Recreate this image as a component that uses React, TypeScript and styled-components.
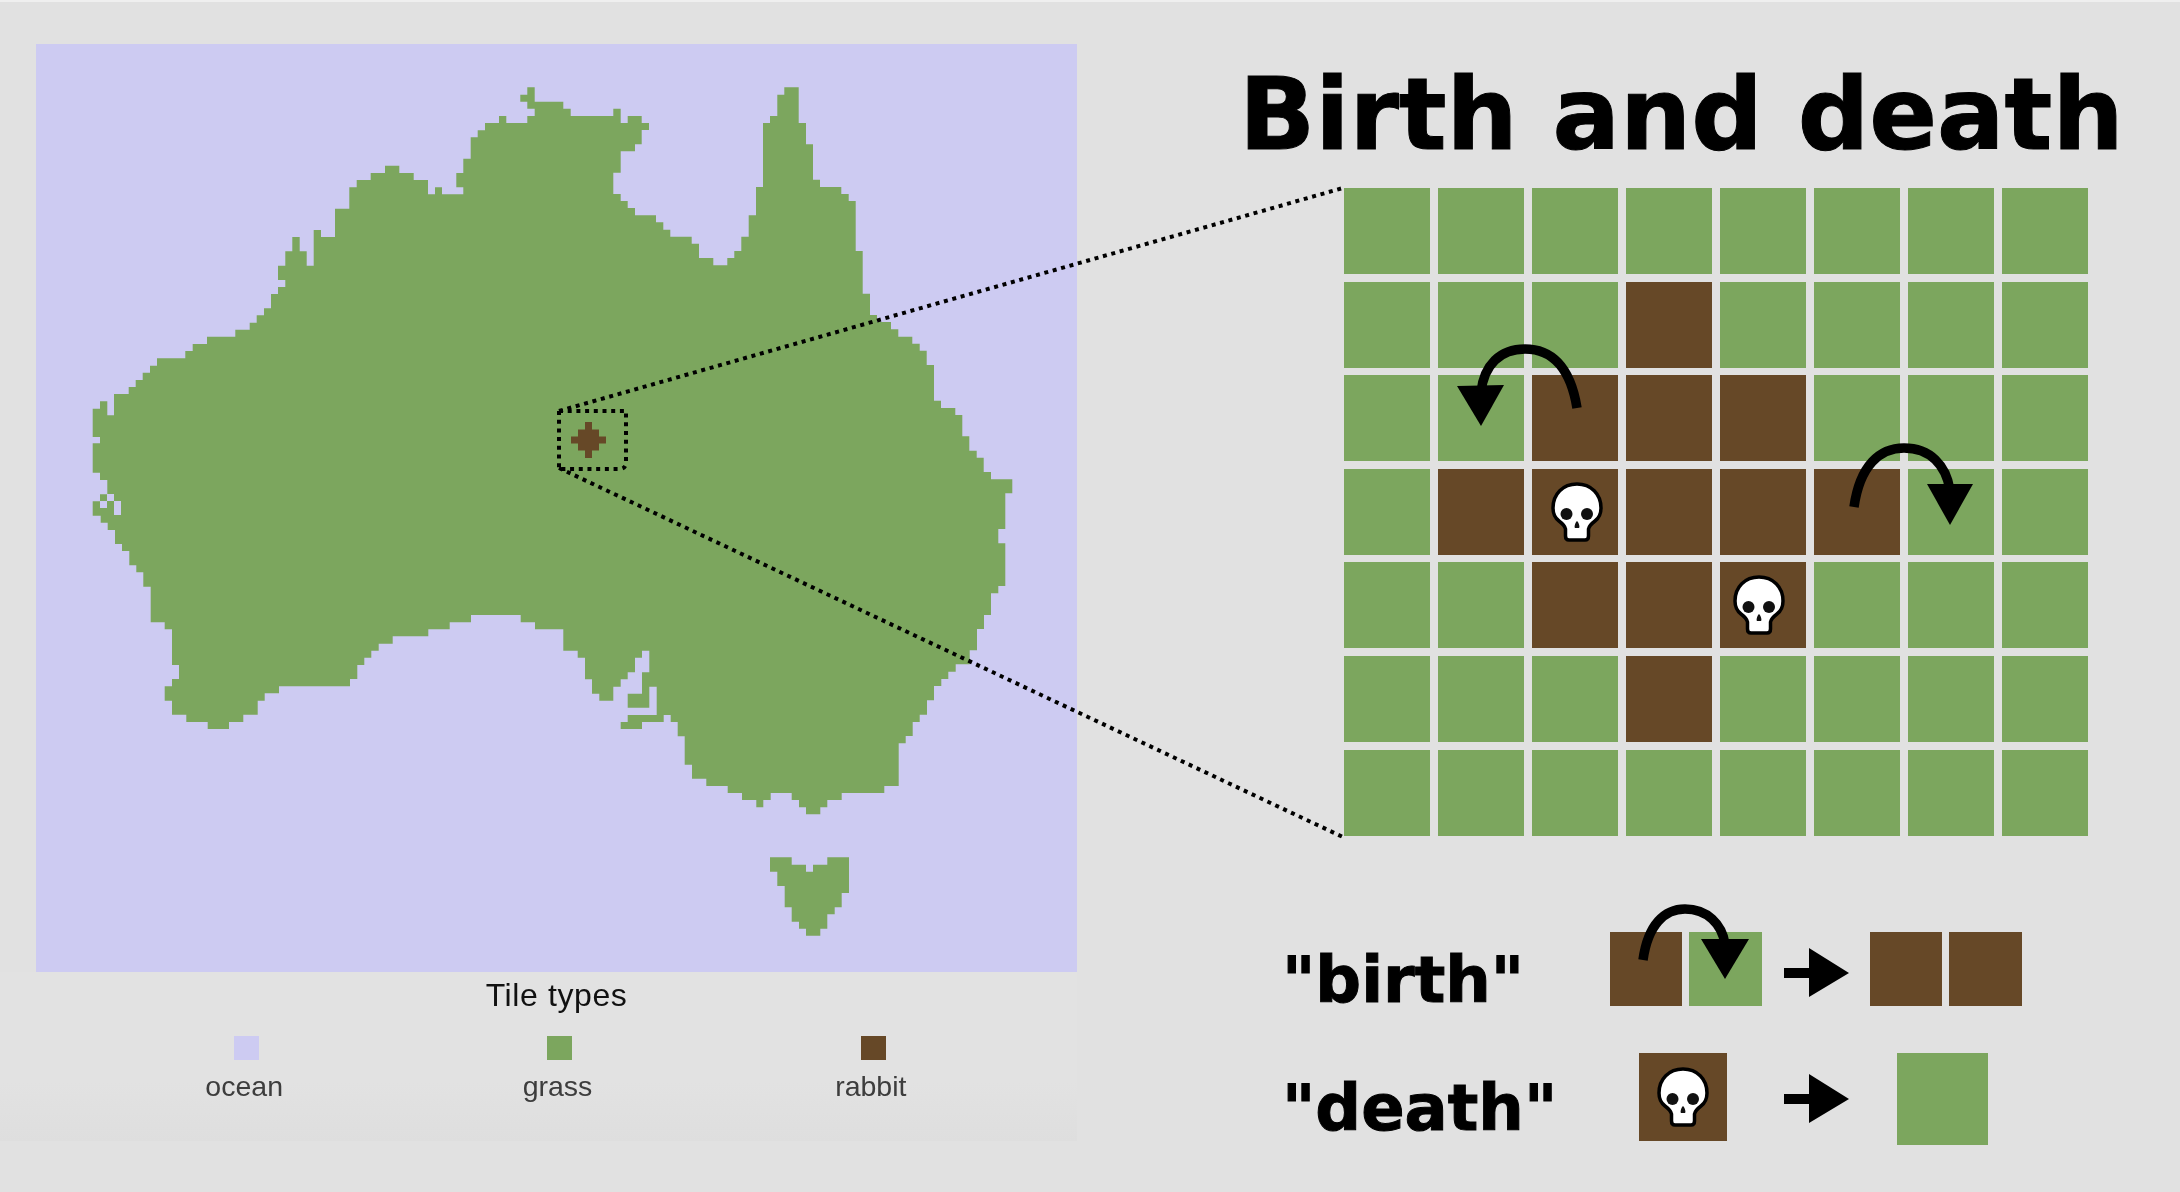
import React from 'react';
import styled, { createGlobalStyle } from 'styled-components';

const OCEAN = '#cdcbf2';
const GRASS = '#7ca65e';
const RABBIT = '#664827';

const GlobalStyle = createGlobalStyle`
  html, body {
    margin: 0;
    padding: 0;
    background: #e1e1e1;
  }
`

const Page = styled.div`
  position: relative;
  display: flex;
  width: 2180px;
  height: 1192px;
  overflow: hidden;
  background: #e1e1e1;
  box-shadow: inset 0 2px #efefef;
  filter: blur(0.5px);
`

const Left = styled.div`
  display: flex;
  flex: none;
  flex-direction: column;
  width: 1041px;
  padding: 44px 0 0 36px;
`

const MapBox = styled.svg`
  display: block;
  flex: none;
  width: 1041px;
  height: 928px;
  background: ${OCEAN};
`

const Legend = styled.div`
  display: flex;
  flex-direction: column;
  align-items: center;
  height: 169px;
  margin-left: -36px;
  padding-left: 36px;
  background: linear-gradient(#e2e2e2 65%, #dedede);
  font-family: "Liberation Sans", Arial, sans-serif;
  filter: blur(0.5px);
`

const LegendTitle = styled.div`
  margin-top: 5px;
  font-size: 32px;
  line-height: 36px;
  letter-spacing: 0.6px;
  color: #111;
`

const LegendRow = styled.div`
  display: flex;
  width: 940px;
  margin-top: 23px;
  margin-left: 2px;
`

const LegendItem = styled.div`
  display: flex;
  flex: 1;
  flex-direction: column;
  align-items: center;
`

const Swatch = styled.div<{ $color: string }>`
  width: 25px;
  height: 24px;
  margin-left: 5px;
  background: ${(p) => p.$color};
`

const LegendLabel = styled.div`
  margin-top: 9px;
  font-size: 28.5px;
  line-height: 34px;
  color: #3d3d3d;
`

const Right = styled.div`
  display: flex;
  flex-direction: column;
  padding: 65px 0 0 160px;
  font-family: "DejaVu Sans", sans-serif;
  font-weight: 700;
  color: #000;
  -webkit-text-stroke: 1px #000;
`

const Title = styled.h1`
  margin: 0 0 0 2px;
  font-size: 100px;
  font-weight: 700;
  line-height: 100px;
  white-space: nowrap;
`

const Board = styled.div`
  position: relative;
  display: grid;
  grid-template-columns: repeat(8, 86px);
  grid-auto-rows: 86px;
  column-gap: 8px;
  row-gap: 7.6px;
  width: 744px;
  margin: 23px 0 0 107px;
`

const Cell = styled.div<{ $rabbit?: boolean }>`
  display: flex;
  align-items: center;
  justify-content: center;
  background: ${(p) => (p.$rabbit ? RABBIT : GRASS)};
`

const Overlay = styled.svg`
  position: absolute;
  top: 0;
  left: 0;
  overflow: visible;
  pointer-events: none;
`

const Rules = styled.div`
  display: flex;
  flex-direction: column;
  gap: 41px;
  margin: 96px 0 0 45px;
`

const Rule = styled.div`
  display: flex;
  align-items: flex-start;
`

const RuleLabel = styled.div<{ $width: number; $top: number }>`
  width: ${(p) => p.$width}px;
  margin-top: ${(p) => p.$top}px;
  font-size: 64px;
  line-height: 64px;
  white-space: nowrap;
`

const Pair = styled.div`
  position: relative;
  display: flex;
  gap: 7px;
`

const SmallTile = styled.div<{ $rabbit?: boolean }>`
  width: 72.5px;
  height: 74px;
  background: ${(p) => (p.$rabbit ? RABBIT : GRASS)};
`

const BigTile = styled.div<{ $rabbit?: boolean }>`
  display: flex;
  align-items: center;
  justify-content: center;
  width: ${(p) => (p.$rabbit ? 88 : 91)}px;
  height: ${(p) => (p.$rabbit ? 88 : 92)}px;
  background: ${(p) => (p.$rabbit ? RABBIT : GRASS)};
`

const StepArrow = styled.svg<{ $top: number; $gap: number; $left: number }>`
  flex: none;
  width: 65px;
  height: 50px;
  margin: ${(p) => p.$top}px ${(p) => p.$gap}px 0 ${(p) => p.$left}px;
`

const SkullIcon = styled.svg<{ $nudge?: number }>`
  width: 54px;
  height: 62px;
  margin-left: ${(p) => p.$nudge ?? 0}px;
`

const ZoomLines = styled.svg`
  position: absolute;
  top: 0;
  left: 0;
  width: 2180px;
  height: 1192px;
  pointer-events: none;
`

// outline traced from 3x crops of the map, one string per crop
const NW = `38,1016 60,1016 60,994 82,994 82,1036 102,1036 102,972 146,972 146,951 167,951 167,930 188,930 188,908 210,908 210,887 231,887 231,865 316,865 316,843 338,843 338,822 381,822 381,800 466,800 466,779 509,779 509,758 530,758 530,736 552,736 552,715 573,715 573,672 594,672 594,651 616,651 616,630 594,630 594,587 616,587 616,544 637,544 637,501 659,501 659,544 680,544 680,587 701,587 701,480 723,480 723,501 765,501 765,416 808,416 808,352 830,352 830,330 872,330 872,309 915,309 915,287 958,287 958,309 1001,309 1001,330 1044,330 1044,373 1065,373 1065,352 1086,352 1086,373 1150,373 1150,352 1129,352 1129,309 1150,309 1150,266 1172,266 1172,202 1193,202 1193,181 1215,181 1215,159 1257,159 1257,138 1279,138 1279,159 1342,159 1342,138 1364,138 1364,116 1342,116 1342,95 1321,95 1321,74 1342,74 1342,52 1364,52 1364,95 1450,95`
const NE = `70,95 70,116 92,116 92,138 220,138 220,116 242,116 242,159 263,159 263,138 305,138 305,159 327,159 327,180 305,180 305,223 285,223 285,244 242,244 242,308 220,308 220,372 242,372 242,393 263,393 263,414 285,414 285,436 348,436 348,457 370,457 370,479 391,479 391,500 455,500 455,521 477,521 477,564 520,564 520,586 562,586 562,564 583,564 583,543 604,543 604,500 626,500 626,436 648,436 648,351 669,351 669,159 690,159 690,138 712,138 712,74 733,74 733,52 776,52 776,159 798,159 798,223 819,223 819,329 840,329 840,351 904,351 904,372 926,372 926,393 947,393 947,543 968,543 968,671 990,671 990,735 1011,735 1011,756 1053,756 1053,778 1075,778 1075,800 1117,800 1117,821 1139,821 1139,842 1160,842 1160,885 1182,885 1182,992 1203,992 1203,1014 1246,1014 1246,1035 1267,1035 1267,1099 1288,1099 1288,1142 1310,1142 1310,1163 1331,1163 1331,1206 1353,1206 1353,1228 1417,1228 1417,1270 1396,1270 1396,1377 1375,1377 1375,1420 1396,1420`
const SE = `1396,130 1396,258 1375,258 1375,280 1353,280 1353,345 1332,345 1332,387 1311,387 1311,451 1289,451 1289,493 1247,493 1247,515 1225,515 1225,537 1204,537 1204,558 1182,558 1182,601 1161,601 1161,644 1139,644 1139,666 1118,666 1118,708 1097,708 1097,730 1076,730 1076,858 1033,858 1033,879 905,879 905,900 862,900 862,922 841,922 841,943 798,943 798,922 777,922 777,900 755,900 755,879 692,879 692,900 670,900 670,922 649,922 649,900 606,900 606,879 563,879 563,858 499,858 499,836 456,836 456,794 434,794 434,709 413,709 413,666 392,666 392,645 371,645 371,666 306,666 306,687 242,687 242,666 263,666 263,645 350,645 350,560 328,560 328,623 263,623 263,581 306,581 306,517 328,517 328,452 306,452 306,473 285,473 285,517 263,517 263,538 242,538 242,560 220,560 220,602 178,602 178,581 156,581 156,538 135,538 135,473 113,473 113,452 70,452 70,388`
const SW = `1450,388 1365,388 1365,367 1322,367 1322,345 1173,345 1173,367 1109,367 1109,388 1045,388 1045,409 938,409 938,431 896,431 896,452 874,452 874,473 853,473 853,495 832,495 832,537 810,537 810,559 597,559 597,580 554,580 554,602 533,602 533,644 490,644 490,666 447,666 447,687 383,687 383,666 319,666 319,644 276,644 276,602 254,602 254,559 276,559 276,537 297,537 297,495 276,495 276,388 254,388 254,367 212,367 212,260 190,260 190,217 169,217 169,196 148,196 148,153 126,153 126,132 105,132 105,90 83,90 83,68 62,68 62,47 40,47`
const WEST = `38,1337 38,1294 60,1294 60,1273 82,1273 82,1230 60,1230 60,1208 38,1208 38,1120 60,1120 60,1101 38,1101`
const TASMANIA = `690,1072 755,1072 755,1094 798,1094 798,1115 819,1115 819,1094 862,1094 862,1072 927,1072 927,1179 905,1179 905,1222 884,1222 884,1243 862,1243 862,1286 841,1286 841,1307 798,1307 798,1286 777,1286 777,1265 755,1265 755,1222 734,1222 734,1158 712,1158 712,1115 690,1115`

// crop coordinates to page coordinates
const place = (points: string, x: number, y: number) =>
  points
    .split(' ')
    .map((pair) => {
      const [a, b] = pair.split(',').map(Number);
      return `${(x + a / 3).toFixed(1)},${(y + b / 3).toFixed(1)}`;
    })
    .join(' ');

const mainland = [
  place(NW, 80, 70),
  place(NE, 540, 70),
  place(SE, 540, 500),
  place(SW, 80, 500),
  place(WEST, 80, 70),
].join(' ');

const tasmania = place(TASMANIA, 540, 500);

// tile rows of the zoomed board, 1 is a rabbit
const BOARD = [
  [0, 0, 0, 0, 0, 0, 0, 0],
  [0, 0, 0, 1, 0, 0, 0, 0],
  [0, 0, 1, 1, 1, 0, 0, 0],
  [0, 1, 1, 1, 1, 1, 0, 0],
  [0, 0, 1, 1, 1, 0, 0, 0],
  [0, 0, 0, 1, 0, 0, 0, 0],
  [0, 0, 0, 0, 0, 0, 0, 0],
];

const Skull: React.FC<{ nudge?: number }> = ({ nudge }) => (
  <SkullIcon $nudge={nudge} viewBox="0 0 54 62">
    <path
      d="M27 3C13 3 3 13 3 27C3 33 5 37 9 40C13 43 15 45 15.5 48L15.5 55C15.5 58 17 59 19 59L35 59C37 59 38.5 58 38.5 55L38.5 48C39 45 41 43 45 40C49 37 51 33 51 27C51 13 41 3 27 3Z"
      fill="#fff"
      stroke="#000"
      strokeWidth="3.5"
    />
    <circle cx="16.5" cy="33" r="6" fill="#111" />
    <circle cx="37" cy="33" r="6" fill="#111" />
    <path d="M27 40C25 42 24 46 25 47H29C30 46 29 42 27 40Z" fill="#111" />
  </SkullIcon>
);

const Jump: React.FC<{ d: string; head: string }> = ({ d, head }) => (
  <>
    <path d={d} fill="none" stroke="#000" strokeWidth="9.5" />
    <polygon points={head} fill="#000" />
  </>
);

const RightArrow: React.FC<{ top: number; gap: number; left: number }> = ({ top, gap, left }) => (
  <StepArrow $top={top} $gap={gap} $left={left} viewBox="0 0 65 50">
    <polygon points="0,20 25,20 25,0 65,25 25,49 25,30 0,30" fill="#000" />
  </StepArrow>
);

const App: React.FC = () => {
  return (
    <Page>
      <GlobalStyle />
      <Left>
        <MapBox viewBox="36 44 1041 928">
          <polygon points={mainland} fill={GRASS} />
          <polygon points={tasmania} fill={GRASS} />
          <g fill={OCEAN}>
            <rect x="100" y="501" width="7" height="7" />
            <rect x="107" y="494" width="7" height="7" />
            <rect x="114" y="501" width="7" height="14" />
          </g>
          <polygon
            points="585,422 592,422 592,429.5 599,429.5 599,436.5 606,436.5 606,443.5 599,443.5 599,450.5 592,450.5 592,458 585,458 585,450.5 578,450.5 578,443.5 571,443.5 571,436.5 578,436.5 578,429.5 585,429.5"
            fill={RABBIT}
          />
        </MapBox>
        <Legend>
          <LegendTitle>Tile types</LegendTitle>
          <LegendRow>
            <LegendItem>
              <Swatch $color={OCEAN} />
              <LegendLabel>ocean</LegendLabel>
            </LegendItem>
            <LegendItem>
              <Swatch $color={GRASS} />
              <LegendLabel>grass</LegendLabel>
            </LegendItem>
            <LegendItem>
              <Swatch $color={RABBIT} />
              <LegendLabel>rabbit</LegendLabel>
            </LegendItem>
          </LegendRow>
        </Legend>
      </Left>
      <Right>
        <Title>Birth and death</Title>
        <Board>
          {BOARD.flatMap((row, y) =>
            row.map((tile, x) => (
              <Cell key={`${x}-${y}`} $rabbit={tile === 1}>
                {x === 2 && y === 3 && <Skull nudge={4} />}
                {x === 4 && y === 4 && <Skull nudge={-8} />}
              </Cell>
            )),
          )}
          <Overlay width="744" height="648" viewBox="1344 188 744 648">
            <Jump d="M1577 408C1570 365 1550 349 1525 349C1500 349 1484 365 1481 392" head="1457,386 1504,385 1481,426" />
            <Jump d="M1854 507C1860 465 1880 448 1904 448C1930 448 1946 465 1950 490" head="1927,484 1973,484 1950,525" />
          </Overlay>
        </Board>
        <Rules>
          <Rule>
            <RuleLabel $width={327.5} $top={16}>"birth"</RuleLabel>
            <Pair>
              <SmallTile $rabbit />
              <SmallTile />
              <Overlay width="146" height="74" viewBox="1610 933 146 74">
                <Jump d="M1643 961C1648 925 1665 910 1685 910C1707 910 1722 925 1725 945" head="1701,940 1749,940 1725,980" />
              </Overlay>
            </Pair>
            <RightArrow top={16} gap={21} left={22} />
            <Pair>
              <SmallTile $rabbit />
              <SmallTile $rabbit />
            </Pair>
          </Rule>
          <Rule>
            <RuleLabel $width={356.5} $top={23}>"death"</RuleLabel>
            <BigTile $rabbit>
              <Skull />
            </BigTile>
            <RightArrow top={21} gap={48} left={57} />
            <BigTile />
          </Rule>
        </Rules>
      </Right>
      <ZoomLines viewBox="0 0 2180 1192">
        <path
          d="M559 411L1343 188M559 468L1345 838M559 411H626V462Q626 469 619 469H562M559 411V468"
          fill="none"
          stroke="#000"
          strokeWidth="4"
          strokeDasharray="4 4.7"
        />
      </ZoomLines>
    </Page>
  )
}

export default App;
